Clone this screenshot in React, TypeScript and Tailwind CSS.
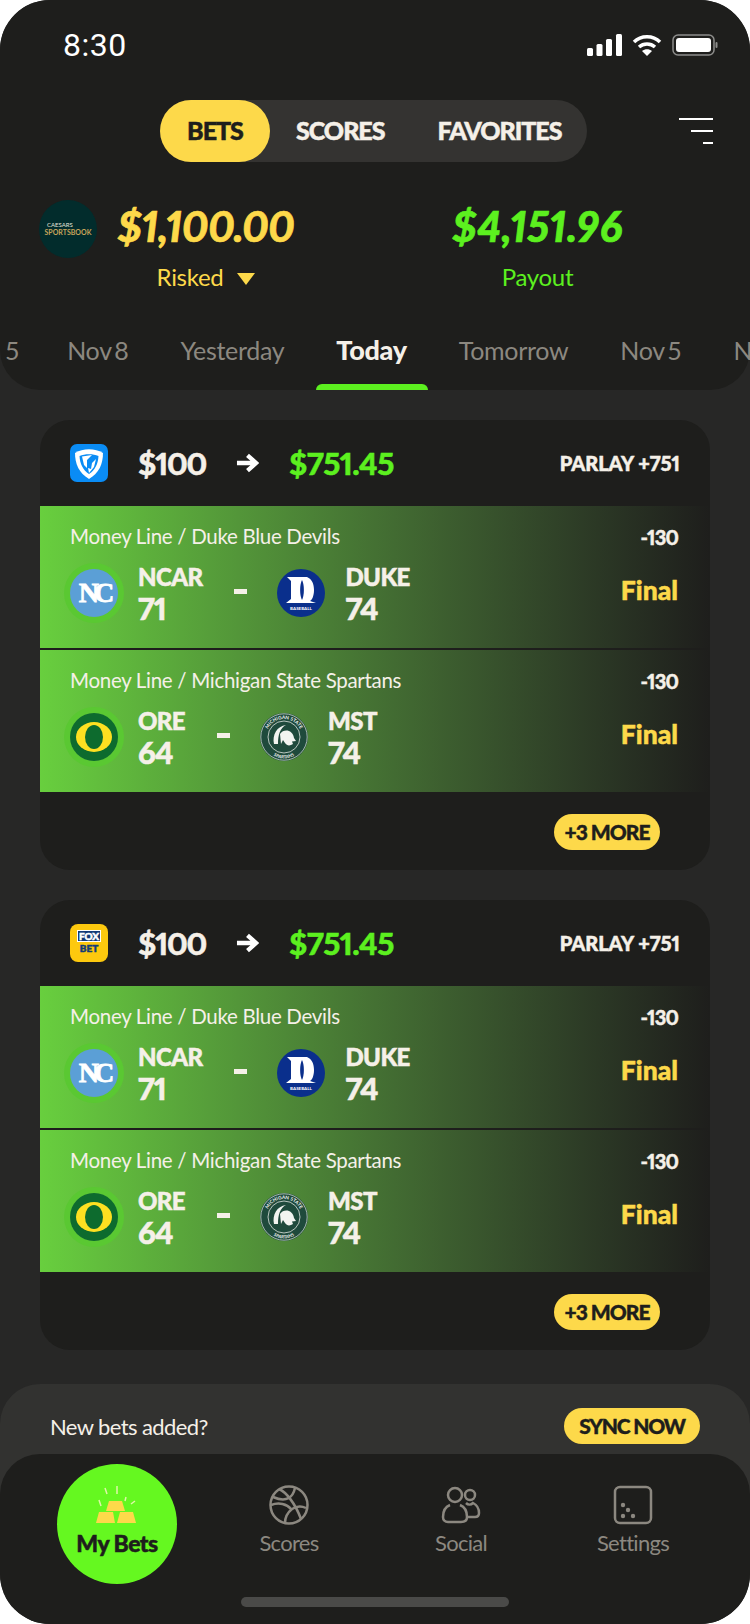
import React from 'react';

type Team = { code: string; score: number; logo: React.ReactNode };
type Leg = { label: string; home: Team; away: Team };

const serif = { fontFamily: '"Liberation Serif", serif' };

const TarHeels = () => (
  <svg viewBox="0 0 48 48" className="w-12 h-12">
    <circle cx="24" cy="24" r="24" fill="#5b9fd6" />
    <text x="24" y="33" textAnchor="middle" fontSize="28" fontWeight="900" letterSpacing="-5" fill="#fff" stroke="#fff" strokeWidth="0.8" style={serif}>NC</text>
  </svg>
);

const Duke = () => (
  <svg viewBox="0 0 48 48" className="w-12 h-12">
    <circle cx="24" cy="24" r="24" fill="#0a2f8c" />
    <path d="M10 8H30C35 10 37 15 37 21C37 27 35 31 33 32L39 34H9L14 30V12Z" fill="#fff" />
    <path d="M25 11C27.500 16 27.500 26 25 31C22.500 26 22.500 16 25 11Z" fill="#0a2f8c" />
    <text x="24" y="41" textAnchor="middle" fontSize="4.500" fontWeight="700" fill="#fff">BASEBALL</text>
  </svg>
);

const Oregon = () => (
  <svg viewBox="0 0 48 48" className="w-12 h-12">
    <circle cx="24" cy="24" r="24" fill="#0d6b2e" />
    <ellipse cx="24" cy="24" rx="18" ry="15" fill="#fde021" />
    <ellipse cx="24" cy="24" rx="9" ry="12" fill="#0d6b2e" />
  </svg>
);

const Spartans = () => (
  <svg viewBox="0 0 48 48" className="w-12 h-12">
    <circle cx="24" cy="24" r="24" fill="#1f4a3c" />
    <circle cx="24" cy="24" r="23.200" fill="none" stroke="#dfe5e0" strokeWidth="0.7" />
    <circle cx="24" cy="24" r="16" fill="none" stroke="#dfe5e0" strokeWidth="0.8" />
    <defs>
      <path id="msuTop" d="M6 24a18 18 0 0 1 36 0" />
      <path id="msuBottom" d="M4.500 26a19.500 19.500 0 0 0 39 0" />
    </defs>
    <text fontSize="4.800" fontWeight="700" fill="#eef2ee">
      <textPath href="#msuTop" startOffset="50%" textAnchor="middle">MICHIGAN STATE</textPath>
    </text>
    <text fontSize="4.400" fontWeight="700" fill="#eef2ee">
      <textPath href="#msuBottom" startOffset="50%" textAnchor="middle">SPARTANS</textPath>
    </text>
    <path d="M14 31C12 22 17 13 26 12C20 15 18 22 18 31Z" fill="#f2f4f0" />
    <path d="M20 21C24 15 33 17 34 25L36 28L32 28.500L33 31C30 33 27 33 25 30L23 27L21 31Z" fill="#f2f4f0" />
  </svg>
);

const FanDuel = () => (
  <svg viewBox="0 0 38 38" className="w-[38px] h-[38px]">
    <rect width="38" height="38" rx="7" fill="#0a8cf5" />
    <path d="M5 9C13 4 25 4 33 9C33 20 29 29 19 35C9 29 5 20 5 9Z" fill="#fff" />
    <path d="M9.500 12C15 9.500 23 9.500 28.500 12C28 20 25 26 19 30C13 26 10 20 9.500 12Z" fill="#0a8cf5" />
    <path d="M12 12.500L22 11L17 16L17 24L14 21ZM26 15L24 23L19 29L18 24L21 25L22 19Z" fill="#fff" />
  </svg>
);

const FoxBet = () => (
  <div className="w-[38px] h-[38px] rounded-[8px] bg-[#fdc90e] flex flex-col items-center pt-[6px]">
    <div className="w-[24px] h-[12px] bg-[#123a78] border border-white text-white text-[10px] leading-[10px] font-black text-center">FOX</div>
    <div className="w-[24px] h-[12px] text-[#123a78] text-[10px] leading-[12px] font-black text-center">BET</div>
  </div>
);

const legs: Leg[] = [
  {
    label: 'Money Line / Duke Blue Devils',
    home: { code: 'NCAR', score: 71, logo: <TarHeels /> },
    away: { code: 'DUKE', score: 74, logo: <Duke /> },
  },
  {
    label: 'Money Line / Michigan State Spartans',
    home: { code: 'ORE', score: 64, logo: <Oregon /> },
    away: { code: 'MST', score: 74, logo: <Spartans /> },
  },
];

const TeamScore = ({ team }: { team: Team }) => (
  <div className="ml-5 flex flex-col text-[#f5f0e8] font-black proportional-nums [-webkit-text-stroke:0.5px_currentColor]">
    <span className="text-[24px] leading-[30px] tracking-[-0.6px]">{team.code}</span>
    <span className="text-[31px] leading-[32px] tracking-[-1px]">{team.score}</span>
  </div>
);

const LegRow = ({ leg }: { leg: Leg }) => (
  <div className="h-[142px] pl-[30px] pr-[32px] bg-gradient-to-r from-[#68cf3e] to-[#1e1e1c]">
    <div className="h-[52px] pt-[9px] flex justify-between items-center text-[#f5f0e8]">
      <span className="text-[20.500px] font-normal tracking-[-0.3px]">{leg.label}</span>
      <span className="text-[20px] font-black tracking-[-0.8px] proportional-nums [-webkit-text-stroke:0.4px_currentColor]">-130</span>
    </div>
    <div className="mt-[4px] flex items-center">
      <div className="rounded-full ring-[6px] ring-[#5ac832]">{leg.home.logo}</div>
      <TeamScore team={leg.home} />
      <span className="ml-[32px] mr-[30px] -mt-[4px] w-[13px] h-[5px] bg-[#f5f0e8]" />
      {leg.away.logo}
      <TeamScore team={leg.away} />
      <span className="ml-auto -mt-[4px] text-[26.500px] font-black text-[#fdd94a] [-webkit-text-stroke:0.5px_currentColor]">Final</span>
    </div>
  </div>
);

const BetCard = ({ logo }: { logo: React.ReactNode }) => (
  <article className="bg-[#1e1e1c] rounded-[30px] overflow-hidden">
    <div className="h-[86px] pl-[30px] pr-[30px] flex items-center font-black proportional-nums [-webkit-text-stroke:0.5px_currentColor]">
      {logo}
      <span className="ml-[30px] text-[31px] tracking-[-1.200px] text-[#f5f0e8]">$100</span>
      <svg viewBox="0 0 24 20" className="ml-[30px] w-[23px] h-[20px]">
        <path d="M1 10h19M12 2l9 8-9 8" fill="none" stroke="#fff" strokeWidth="4.500" />
      </svg>
      <span className="ml-[30px] text-[31px] tracking-[-0.500px] text-[#5cf01f]">$751.45</span>
      <span className="ml-auto text-[20px] tracking-[0px] text-[#f5f0e8]">PARLAY +751</span>
    </div>
    <div className="flex flex-col gap-[2px]">
      {legs.map((leg) => (
        <LegRow key={leg.label} leg={leg} />
      ))}
    </div>
    <div className="h-[78px] pt-[22px] pr-[50px] flex justify-end items-start">
      <button className="h-[36px] w-[106px] rounded-full bg-[#fdd94a] text-[#1e1e1c] text-[21px] tracking-[-1px] font-black [-webkit-text-stroke:0.4px_currentColor]">+3 MORE</button>
    </div>
  </article>
);

const GoldBars = () => (
  <svg viewBox="0 0 48 48" className="w-12 h-12">
    <g fill="#fdd94a">
      <path d="M16 23h13l3 10H13z" />
      <path d="M6 34h14l2 11H3z" />
      <path d="M27 34h13l3 11H24z" />
    </g>
    <g stroke="#dff5a8" strokeWidth="1.500" fill="none">
      <path d="M24 8v8M12 10l2 6M6 22l2 6M33 19l-1 4M42 23l-4 3" />
    </g>
  </svg>
);

const BallIcon = () => (
  <svg viewBox="0 0 40 40" className="w-10 h-10" fill="none" stroke="#8c8880" strokeWidth="2.500">
    <circle cx="20" cy="20" r="18.500" />
    <path d="M10 4c7 3 16 14 22 30" />
    <path d="M26 3c-2 9-8 15-22 9" />
    <path d="M2 20c8-3 16-1 20 4" />
    <path d="M37 23c-6-3-11-1-14 1-5 4-7 9-7 14" />
  </svg>
);

const SocialIcon = () => (
  <svg viewBox="0 0 40 40" className="w-10 h-10" fill="none" stroke="#8c8880" strokeWidth="2.500">
    <circle cx="14" cy="10" r="7" />
    <circle cx="29" cy="10" r="5" />
    <path d="M9 20c-5 2-7 7-7 12 0 3 2 5 5 5h13c4 0 6-2 6-5 0-5-2-10-7-12" />
    <path d="M25 18c2 2 5 2 7 0 4 2 6 6 6 10 0 3-2 4-4 4h-8" />
  </svg>
);

const SettingsIcon = () => (
  <svg viewBox="0 0 40 40" className="w-10 h-10" fill="none" stroke="#8c8880" strokeWidth="2.500">
    <rect x="2" y="2" width="36" height="36" rx="5" />
    <g fill="#8c8880" stroke="none">
      <circle cx="10" cy="20" r="2.200" />
      <circle cx="15" cy="25" r="2.200" />
      <circle cx="10" cy="31" r="2.200" />
      <circle cx="20" cy="31" r="2.200" />
    </g>
  </svg>
);

const navItems = [
  { label: 'Scores', icon: <BallIcon /> },
  { label: 'Social', icon: <SocialIcon /> },
  { label: 'Settings', icon: <SettingsIcon /> },
];

export default function App() {
  return (
    <div className="w-[750px] h-[1624px] bg-white [font-family:Lato,sans-serif]">
      <div className="w-full h-full rounded-[50px] overflow-hidden bg-[#272726] flex flex-col">
        <header className="shrink-0 h-[390px] bg-[#1e1e1c] rounded-b-[40px]">
          {/* Status bar */}
          <div className="h-[90px] pl-[63px] pr-[32px] flex items-center justify-between text-white">
            <span className="[font-family:Roboto,sans-serif] text-[32px] tracking-[0.5px]">8:30</span>
            <div className="flex items-center gap-[10px]">
              <svg viewBox="0 0 35 22" className="w-[35px] h-[22px]" fill="#fff">
                <rect x="0" y="14" width="6" height="8" rx="1.500" />
                <rect x="9.500" y="10" width="6" height="12" rx="1.500" />
                <rect x="19" y="5" width="6" height="17" rx="1.500" />
                <rect x="29" y="0" width="6" height="22" rx="1.500" />
              </svg>
              <svg viewBox="0 0 30 22" className="w-[30px] h-[22px]" fill="none" stroke="#fff" strokeWidth="3.500">
                <path d="M2 8c7-7 19-7 26 0" />
                <path d="M7 13c4.500-4 11.500-4 16 0" />
                <path d="M15 22l-5-5c3-2.500 7-2.500 10 0z" fill="#fff" stroke="none" />
              </svg>
              <svg viewBox="0 0 46 22" className="w-[46px] h-[22px]">
                <rect x="1" y="1" width="41" height="20" rx="5" fill="none" stroke="#8c8c8a" strokeWidth="1.500" />
                <rect x="4" y="4" width="35" height="14" rx="3" fill="#fff" />
                <rect x="43.500" y="8" width="2" height="6" rx="1" fill="#8c8c8a" />
              </svg>
            </div>
          </div>

          {/* Tabs */}
          <div className="mt-[10px] pl-[160px] pr-[37px] flex items-center justify-between">
            <div className="h-[62px] w-[427px] rounded-full bg-[#343331] flex items-center font-black text-[25px] tracking-[-1px] text-[#f5f0e8] [-webkit-text-stroke:0.5px_currentColor]">
              <span className="h-full w-[110px] rounded-full bg-[#fdd94a] text-[#1e1e1c] flex items-center justify-center">BETS</span>
              <span className="ml-[26px]">SCORES</span>
              <span className="ml-[53px]">FAVORITES</span>
            </div>
            <div className="w-[34px] flex flex-col items-end gap-[10px]">
              <div className="w-[34px] h-[2px] bg-white" />
              <div className="w-[22px] h-[2px] bg-white" />
              <div className="w-[10px] h-[2px] bg-white" />
            </div>
          </div>

          {/* Totals */}
          <div className="mt-[38px] pl-[39px] flex">
            <div className="w-[58px] h-[58px] rounded-full bg-[#022c2c] flex flex-col justify-center items-center">
              <span className="text-[6px] leading-[7px] text-[#e8e4da] self-start ml-[8px]">CAESARS</span>
              <span className="text-[7px] leading-[9px] font-bold text-[#c7a45a]">SPORTSBOOK</span>
            </div>
            <div className="ml-5 w-[178px] flex flex-col items-center">
              <span className="h-[56px] -mt-[2px] leading-[56px] whitespace-nowrap text-[42px] font-black italic tracking-[-0.300px] proportional-nums text-[#fdd94a] [-webkit-text-stroke:0.7px_currentColor]">$1,100.00</span>
              <div className="mt-[6px] h-[34px] flex items-center gap-[14px] text-[24px] font-normal tracking-[-0.3px] text-[#fdd94a]">
                Risked
                <svg viewBox="0 0 18 12" className="w-[18px] h-[12px] mt-[4px]"><path d="M0 0h18L9 12z" fill="#fdd94a" /></svg>
              </div>
            </div>
            <div className="ml-[157px] w-[171px] flex flex-col items-center">
              <span className="h-[56px] -mt-[2px] leading-[56px] whitespace-nowrap text-[42px] font-black italic tracking-[0.700px] proportional-nums text-[#5cf01f] [-webkit-text-stroke:0.7px_currentColor]">$4,151.96</span>
              <span className="mt-[6px] h-[34px] leading-[34px] text-[24px] font-normal tracking-[-0.3px] text-[#5cf01f]">Payout</span>
            </div>
          </div>

          {/* Dates */}
          <div className="mt-[38px] h-[58px] pl-[5px] flex gap-[52px] overflow-hidden whitespace-nowrap text-[25px] font-normal tracking-[-0.3px] [word-spacing:-3px] text-[#8c8880] leading-[36px]">
            <span className="-mr-[4px]">5</span>
            <span>Nov 8</span>
            <span>Yesterday</span>
            <span className="relative h-[58px] text-[27px] font-black text-[#f5f0e8]">
              Today
              <span className="absolute bottom-0 left-[-20px] w-[112px] h-[6px] rounded-t-full bg-[#5cf01f]" />
            </span>
            <span>Tomorrow</span>
            <span>Nov 5</span>
            <span>Nov 4</span>
          </div>
        </header>

        <main className="flex-1 min-h-0 pt-[30px] px-[40px] flex flex-col gap-[30px]">
          <BetCard logo={<FanDuel />} />
          <BetCard logo={<FoxBet />} />
        </main>

        <div className="shrink-0 h-[110px] px-[50px] pt-[24px] rounded-t-[40px] bg-[#323230]">
          <div className="h-[36px] flex items-center justify-between">
            <span className="text-[22px] font-normal tracking-[-0.6px] text-[#f5f0e8]">New bets added?</span>
            <button className="h-[36px] w-[136px] rounded-full bg-[#fdd94a] text-[#1e1e1c] text-[21px] tracking-[-1.200px] font-black [-webkit-text-stroke:0.4px_currentColor]">SYNC NOW</button>
          </div>
        </div>

        <nav className="shrink-0 h-[170px] -mt-[40px] relative rounded-t-[40px] bg-[#1e1e1c]">
          <div className="ml-[31px] w-[688px] h-[130px] pt-[10px] grid grid-cols-4 text-[22px] font-normal tracking-[-0.7px] text-[#8c8880]">
            <div className="mx-auto w-[120px] h-[120px] rounded-full bg-[#65f820] flex flex-col items-center pt-[14px]">
              <GoldBars />
              <span className="text-[23px] tracking-[-0.5px] font-black text-[#1e1e1c] [-webkit-text-stroke:0.5px_currentColor]">My Bets</span>
            </div>
            {navItems.map((item) => (
              <div key={item.label} className="flex flex-col items-center pt-[21px]">
                {item.icon}
                <span className="mt-[1px]">{item.label}</span>
              </div>
            ))}
          </div>
          <div className="mt-[13px] mx-auto w-[268px] h-[10px] rounded-full bg-[#4a4a48]" />
        </nav>
      </div>
    </div>
  );
}
